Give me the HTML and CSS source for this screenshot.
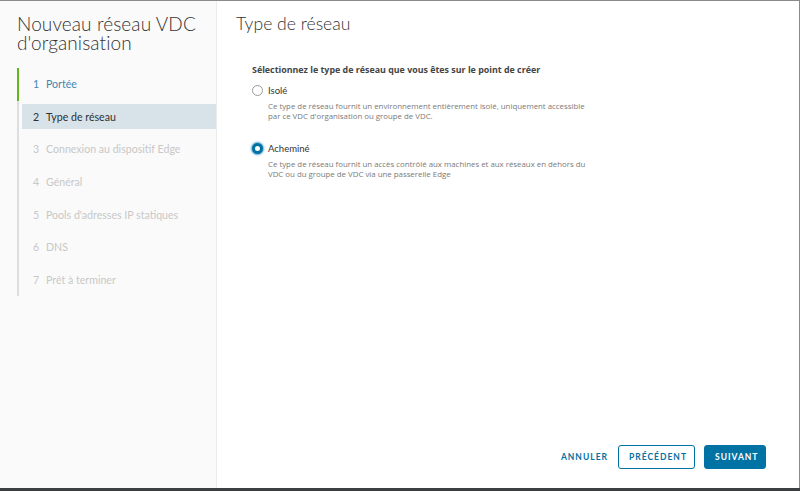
FILE: index.html
```html
<!DOCTYPE html>
<html lang="fr">
<head>
<meta charset="utf-8">
<link rel="stylesheet" href="styles.css">
</head>
<body>
<div class="frame">
  <div class="modal">
    <aside class="side">
      <h1 class="side-title">Nouveau réseau VDC d'organisation</h1>
      <ol class="steps">
        <li class="step done"><span class="step-in"><span class="num">1</span>Portée</span></li>
        <li class="step current"><span class="step-in"><span class="num">2</span>Type de réseau</span></li>
        <li class="step"><span class="step-in"><span class="num">3</span>Connexion au dispositif Edge</span></li>
        <li class="step"><span class="step-in"><span class="num">4</span>Général</span></li>
        <li class="step"><span class="step-in"><span class="num">5</span>Pools d'adresses IP statiques</span></li>
        <li class="step"><span class="step-in"><span class="num">6</span>DNS</span></li>
        <li class="step"><span class="step-in"><span class="num">7</span>Prêt à terminer</span></li>
      </ol>
    </aside>
    <main class="content">
      <h2 class="title">Type de réseau</h2>
      <div class="form">
        <div class="label">Sélectionnez le type de réseau que vous êtes sur le point de créer</div>
        <div class="option">
          <div class="radio-row"><span class="radio"></span><span class="opt-label">Isolé</span></div>
          <p class="desc">Ce type de réseau fournit un environnement entièrement isolé, uniquement accessible<br>par ce VDC d'organisation ou groupe de VDC.</p>
        </div>
        <div class="option">
          <div class="radio-row"><span class="radio checked"></span><span class="opt-label">Acheminé</span></div>
          <p class="desc">Ce type de réseau fournit un accès contrôlé aux machines et aux réseaux en dehors du<br>VDC ou du groupe de VDC via une passerelle Edge</p>
        </div>
      </div>
      <div class="footer">
        <button class="btn link">ANNULER</button>
        <button class="btn outline">PRÉCÉDENT</button>
        <button class="btn primary">SUIVANT</button>
      </div>
    </main>
  </div>
  <div class="under"></div>
</div>
</body>
</html>
```
FILE: styles.css
```css
* { box-sizing: border-box; }
html, body { margin: 0; padding: 0; }
body { width: 800px; height: 491px; overflow: hidden; font-family: Lato, "Open Sans", sans-serif; background: #fff; }
.frame { width: 800px; height: 491px; display: flex; flex-direction: column; border-top: 1px solid #8a8a8a; }
.modal { flex: 1; display: flex; border-right: 1px solid #8a8a8a; min-height: 0; }
.under { height: 3px; background: #3c3f42; }
.side { width: 217px; flex: none; background: #fafafa; border-right: 1px solid #ececec; padding: 13px 0 0 17px; }
.side-title { margin: 0; font-weight: 300; font-size: 19px; line-height: 19px; color: #333; letter-spacing: 0.1px; }
.steps { list-style: none; margin: 16px 0 0 0; padding: 0; border-left: 2px solid #dedede; width: 199px; }
.step { height: 32.6px; display: flex; align-items: center; margin-left: -2px; border-left: 2px solid transparent; padding-left: 3px; }
.step.done { border-left-color: #62b71b; }
.step-in { display: flex; align-items: center; height: 25px; width: 100%; padding-left: 11px; font-size: 10.6px; color: #c8c8c8; }
.num { width: 13px; }
.step.done .step-in { color: #3f87b1; }
.step.current .step-in { background: #d8e3e9; color: #2f2f2f; }
.content { flex: 1; display: flex; flex-direction: column; padding: 13px 33px 19px 19px; }
.title { margin: 0; font-weight: 300; font-size: 17.6px; line-height: 20px; color: #333; }
.form { padding: 30px 0 0 16px; flex: 1; font-family: "Open Sans", Lato, sans-serif; }
.label { font-size: 8.9px; font-weight: 700; color: #444; line-height: 12px; }
.option { margin-top: 7px; }
.option + .option { margin-top: 20px; }
.radio-row { display: flex; align-items: center; height: 14px; }
.radio { width: 11px; height: 11px; border-radius: 50%; border: 1px solid #9a9a9a; background: #fff; margin-right: 5px; }
.radio.checked { border: 3.5px solid #0072a3; box-shadow: 0 0 2px 1px #5aa7d3; }
.opt-label { font-family: Lato, sans-serif; font-size: 9.5px; color: #333; }
.desc { margin: 5px 0 0 16px; font-size: 7.85px; line-height: 9.5px; color: #7a7a7a; }
.footer { display: flex; justify-content: flex-end; align-items: center; gap: 10px; }
.btn { font-family: Lato, "Open Sans", sans-serif; font-size: 8.5px; font-weight: 700; letter-spacing: 1px; height: 24px; border-radius: 3px; padding: 0 10px; cursor: pointer; }
.btn.link { border: none; background: none; color: #0072a3; padding: 0 0; }
.btn.outline { border: 1px solid #0072a3; background: #fff; color: #0072a3; width: 77px; }
.btn.primary { border: 1px solid #0072a3; background: #0072a3; color: #fff; width: 62px; margin-left: -1px; }
```
